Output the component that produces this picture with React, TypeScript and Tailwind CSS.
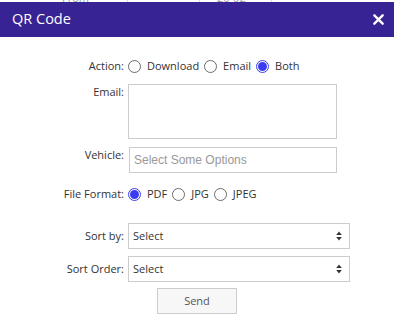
const font = { fontFamily: '"Open Sans", "Noto Sans", sans-serif' };

const Radio = ({ checked, label }: { checked?: boolean; label: string }) => (
  <span className="flex items-center">
    {checked ? (
      <span className="w-[13px] h-[13px] rounded-full border border-[#3b3bf2] flex items-center justify-center">
        <span className="w-[9px] h-[9px] rounded-full bg-[#3b3bf2]" />
      </span>
    ) : (
      <span className="w-[13px] h-[13px] rounded-full border border-[#6b6b6b] bg-white" />
    )}
    <span className="ml-[6px]">{label}</span>
  </span>
);

const Arrows = () => (
  <svg width="6" height="10" viewBox="0 0 6 10" className="mr-[7px]">
    <path d="M3 0.5 L5.8 4 L0.2 4 Z" fill="#333" />
    <path d="M3 9.5 L5.8 6 L0.2 6 Z" fill="#333" />
  </svg>
);

const Label = ({ text, top }: { text: string; top?: boolean }) => (
  <div className={"w-[124px] shrink-0 text-right " + (top ? "self-start" : "")}>
    {text}
  </div>
);

export default function App() {
  return (
    <div className="w-[394px] h-[327px] bg-white overflow-hidden text-[11px] text-[#333]" style={font}>
      <div className="h-[2px] relative overflow-hidden">
        <div className="absolute left-[62px] top-[-8px] text-[#999] text-[11px] leading-[11px]">From</div>
        <div className="absolute left-[217px] top-[-8px] text-[#999] text-[11px] leading-[11px]">20-02</div>
        <div className="absolute left-[127px] top-0 h-[2px] w-px bg-[#ddd]" />
        <div className="absolute left-[199px] top-0 h-[2px] w-px bg-[#ddd]" />
        <div className="absolute left-[271px] top-0 h-[2px] w-px bg-[#ddd]" />
      </div>
      <div className="h-[35px] bg-[#372393] flex items-center justify-between pl-[12px] pr-[10px] text-white">
        <span className="text-[14.5px] leading-none">QR Code</span>
        <svg width="11" height="11" viewBox="0 0 12 12">
          <path d="M1.5 1.5 L10.5 10.5 M10.5 1.5 L1.5 10.5" stroke="white" strokeWidth="2.6" strokeLinecap="round" />
        </svg>
      </div>

      <div className="flex items-center mt-[21px] h-[16px]">
        <Label text="Action:" />
        <div className="flex items-center gap-[5px] ml-[4px]">
          <Radio label="Download" />
          <Radio label="Email" />
          <Radio checked label="Both" />
        </div>
      </div>

      <div className="flex mt-[10px]">
        <Label text="Email:" top />
        <div className="ml-[4px] w-[209px] h-[55px] border border-[#ccc] bg-white" />
      </div>

      <div className="flex mt-[8px]">
        <Label text="Vehicle:" top />
        <div
          className="ml-[5px] w-[208px] h-[26px] border border-[#ccc] flex items-center pl-[4px] text-[#999] text-[12px]"
          style={{ fontFamily: '"Liberation Sans", Arial, sans-serif' }}
        >
          Select Some Options
        </div>
      </div>

      <div className="flex items-center mt-[13px] h-[16px]">
        <Label text="File Format:" />
        <div className="flex items-center gap-[5px] ml-[4px]">
          <Radio checked label="PDF" />
          <Radio label="JPG" />
          <Radio label="JPEG" />
        </div>
      </div>

      <div className="flex items-center mt-[21px]">
        <Label text="Sort by:" />
        <div className="ml-[4px] w-[222px] h-[26px] border border-[#ccc] flex items-center justify-between pl-[4px]">
          <span>Select</span>
          <Arrows />
        </div>
      </div>

      <div className="flex items-center mt-[7px]">
        <Label text="Sort Order:" />
        <div className="ml-[4px] w-[222px] h-[26px] border border-[#ccc] flex items-center justify-between pl-[4px]">
          <span>Select</span>
          <Arrows />
        </div>
      </div>

      <div className="flex mt-[6px] pl-[157px]">
        <button className="w-[80px] h-[26px] border border-[#ccc] bg-[#f7f7f7] text-[#555] text-[11px]">
          Send
        </button>
      </div>
    </div>
  );
}
